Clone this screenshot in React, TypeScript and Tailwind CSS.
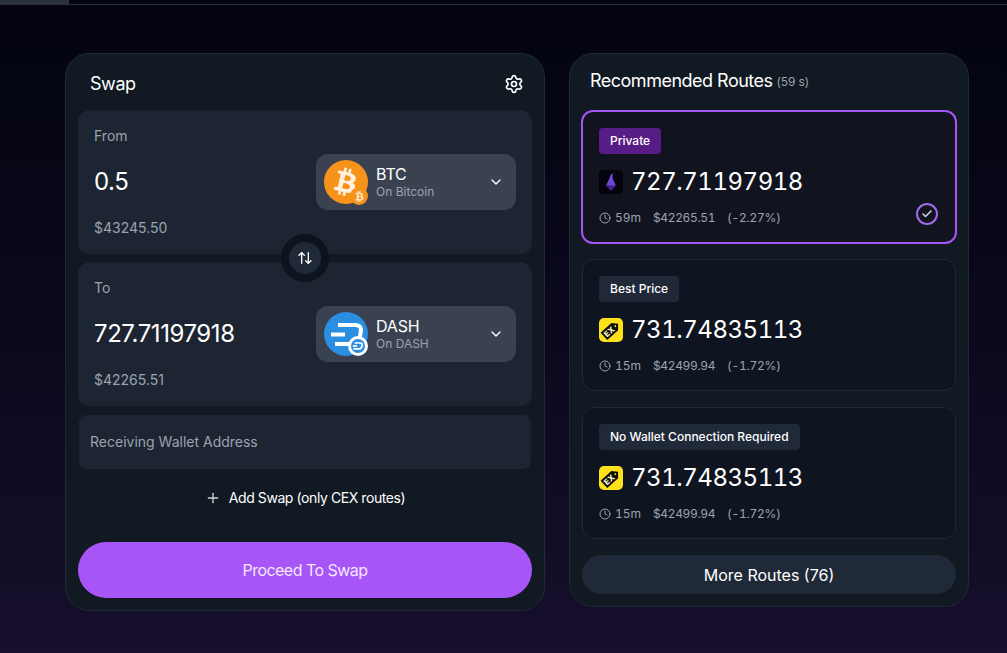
import { ArrowUpDown, Check, ChevronDown, Clock, Plus, Settings } from "lucide-react";
import { FaBtc } from "react-icons/fa";

const font = { fontFamily: "Inter, sans-serif" };

function BtcIcon() {
  return (
    <div className="relative w-11 h-11 shrink-0 rounded-full bg-[#f7931a] flex items-center justify-center">
      <FaBtc className="text-[#fff3e0] w-7 h-7 rotate-[14deg]" />
      <div className="absolute right-0 -bottom-px w-[18px] h-[18px] rounded-full bg-[#f7931a] flex items-center justify-center">
        <FaBtc className="text-[#ffe9cc] w-[11px] h-[11px]" />
      </div>
    </div>
  );
}

function DashIcon() {
  return (
    <div className="relative w-11 h-11 shrink-0">
      <svg viewBox="0 0 44 44" className="w-11 h-11" fill="none" stroke="#fff" strokeWidth="4">
        <circle cx="22" cy="22" r="22" fill="#2a8fe0" stroke="none" />
        <path d="M14 13h17c5 0 6.500 3 5.800 6.500l-.8 4.500c-.8 4.500-3.500 8-8.500 8H11" />
        <path d="M7 22.500h14" />
      </svg>
      <div className="absolute right-0 bottom-0 w-5 h-5 rounded-full bg-[#2a8fe0] border-[3px] border-white flex items-center justify-center">
        <svg viewBox="0 0 14 14" className="w-3 h-3" fill="none" stroke="#fff" strokeWidth="2">
          <path d="M3 3.500h6.500c2 0 2.700 1.200 2.300 2.800l-.3 1.200c-.4 1.800-1.500 2.900-3.200 2.900H1.500" />
          <path d="M1 7h5" />
        </svg>
      </div>
    </div>
  );
}

function WizardIcon() {
  return (
    <svg viewBox="0 0 24 24" className="w-6 h-6 shrink-0">
      <rect width="24" height="24" rx="4" fill="#05030c" />
      <path d="M14 3c-2 1-3.500 3.500-4 6l-2.200 5c-.6 1.500-.4 2.500.7 3h7c1.100-.5 1.300-1.500.7-3l-1.700-3.500c-.9-2.500-1.300-5-.5-7.500z" fill="#6f46cf" />
      <path d="M6.500 14.500c2.500 1.400 8.500 1.400 11 0-.5 1.300-1.500 2.200-2.600 2.500-.4 2.200-1.600 3.500-2.900 3.500s-2.500-1.300-2.900-3.500C8 16.700 7 15.800 6.500 14.500z" fill="#3f2486" />
    </svg>
  );
}

function ExIcon() {
  return (
    <svg viewBox="0 0 24 24" className="w-6 h-6 shrink-0">
      <rect width="24" height="24" rx="5" fill="#fde21a" />
      <g transform="rotate(-42 12 12)">
        <path d="M2.500 7h14.500l4.500 5-4.500 5H2.500z" fill="#0b0b0b" />
        <circle cx="17.800" cy="12" r="1" fill="#fde21a" />
        <text x="9.500" y="15" textAnchor="middle" fontSize="8" fontWeight="800" fill="#fff7c2" fontFamily="Inter, sans-serif">EX</text>
      </g>
    </svg>
  );
}

function SwapBox({ label, amount, usd, token, chain, icon }: { label: string; amount: string; usd: string; token: string; chain: string; icon: React.ReactNode }) {
  return (
    <div className="bg-[#1d2533] rounded-xl p-4">
      <p className="text-sm leading-5 text-[#9ca3af]">{label}</p>
      <div className="mt-2 flex items-center justify-between">
        <span className="text-2xl tracking-[-0.018em] text-white">{amount}</span>
        <div className="w-[200px] h-14 bg-[#3a4252] rounded-xl flex items-center pl-2 pr-3">
          {icon}
          <div className="ml-2 flex-1">
            <p className="text-base leading-5 tracking-[-0.01em] text-white">{token}</p>
            <p className="text-xs leading-4 text-[#9ca3af]">{chain}</p>
          </div>
          <ChevronDown className="w-4 h-4 text-white" />
        </div>
      </div>
      <p className="mt-2 text-sm leading-5 text-[#9ca3af]">{usd}</p>
    </div>
  );
}

function RouteCard({ badge, badgeClass, amount, time, usd, pct, icon, selected }: { badge: string; badgeClass: string; amount: string; time: string; usd: string; pct: string; icon: React.ReactNode; selected?: boolean }) {
  return (
    <div className={`relative rounded-xl px-4 pt-4 ${selected ? "-m-px h-[134px] border-2 border-[#a855f7] bg-[#11141f]" : "h-[132px] border border-[#1f2937] bg-[#0f1520]"}`}>
      <span className={`block w-fit h-[26px] px-[11px] rounded text-xs leading-[26px] font-medium text-white ${badgeClass}`}>{badge}</span>
      <div className="mt-[10px] flex items-center gap-2 h-9">
        {icon}
        <span className="text-2xl tabular-nums tracking-[-0.02em] text-white">{amount}</span>
      </div>
      <div className="mt-[10px] flex items-center text-xs leading-4 tabular-nums text-[#9ca3af]">
        <Clock className="w-3 h-3 mr-1" />
        <span className="w-[25px]">{time}</span>
        <span className="ml-[13px] w-[62px] tracking-[-0.03em]">{usd}</span>
        <span className="ml-3 tracking-[-0.02em]">{pct}</span>
      </div>
      {selected && (
        <div className="absolute right-[17px] bottom-[17px] w-[22px] h-[22px] rounded-full border-2 border-[#9d6be8] flex items-center justify-center">
          <Check className="w-3 h-3 text-[#d9d2ee]" strokeWidth={3} />
        </div>
      )}
    </div>
  );
}

export default function App() {
  return (
    <div style={font} className="h-[653px] overflow-hidden bg-gradient-to-b from-[#03040f] to-[#170f2c]">
      <div className="h-[5px] border-b border-[#2a2d3a]">
        <div className="w-[69px] h-1 bg-[#2c3140]" />
      </div>
      <div className="pt-12 pl-[65px] flex items-start gap-6">
        {/* Swap form */}
        <div className="w-[480px] h-[558px] bg-[#111923] border border-[#1f2937] rounded-3xl px-3 pb-3 flex flex-col">
          <div className="h-14 flex items-center justify-between pl-3 pr-2 pt-[4px]">
            <h1 className="text-lg tracking-[-0.025em] text-white">Swap</h1>
            <Settings className="w-5 h-5 text-white" />
          </div>
          <div className="relative flex flex-col gap-2">
            <SwapBox label="From" amount="0.5" usd="$43245.50" token="BTC" chain="On Bitcoin" icon={<BtcIcon />} />
            <SwapBox label="To" amount="727.71197918" usd="$42265.51" token="DASH" chain="On DASH" icon={<DashIcon />} />
            <div className="absolute left-1/2 top-1/2 -translate-x-1/2 -translate-y-1/2 w-12 h-12 rounded-full bg-[#1f2937] border-8 border-[#0e141e] flex items-center justify-center">
              <ArrowUpDown className="w-4 h-4 text-white" />
            </div>
          </div>
          <div className="mx-px mt-[9px] h-[54px] rounded-lg bg-[#1d2533] flex items-center px-[11px] text-sm text-[#9ca3af]">
            Receiving Wallet Address
          </div>
          <div className="mt-[19px] h-5 flex items-center justify-center gap-2 text-sm tracking-[-0.03em] text-white">
            <Plus className="w-4 h-4 text-[#d1d5db]" />
            <span>Add Swap (only CEX routes)</span>
          </div>
          <button className="mt-auto h-14 w-full rounded-full bg-[#a855f7] text-base tracking-[-0.033em] text-[#f3e8ff]">Proceed To Swap</button>
        </div>

        {/* Routes */}
        <div className="w-[400px] h-[554px] bg-[#111923] border border-[#1f2937] rounded-3xl px-3 pb-3 flex flex-col">
          <div className="h-[57px] shrink-0 flex items-center pl-2 pb-[3px] gap-1">
            <h2 className="text-lg tracking-[-0.028em] text-white">Recommended Routes</h2>
            <span className="text-xs tracking-[-0.01em] text-[#9ca3af] mt-0.5">(59 s)</span>
          </div>
          <div className="flex flex-col gap-4">
            <RouteCard selected badge="Private" badgeClass="bg-[#581c87]" amount="727.71197918" time="59m" usd="$42265.51" pct="(-2.27%)" icon={<WizardIcon />} />
            <RouteCard badge="Best Price" badgeClass="bg-[#1f2937]" amount="731.74835113" time="15m" usd="$42499.94" pct="(-1.72%)" icon={<ExIcon />} />
            <RouteCard badge="No Wallet Connection Required" badgeClass="bg-[#1f2937]" amount="731.74835113" time="15m" usd="$42499.94" pct="(-1.72%)" icon={<ExIcon />} />
          </div>
          <button className="mt-4 h-10 w-full rounded-full bg-[#1f2937] text-base text-white">More Routes (76)</button>
        </div>
      </div>
    </div>
  );
}
